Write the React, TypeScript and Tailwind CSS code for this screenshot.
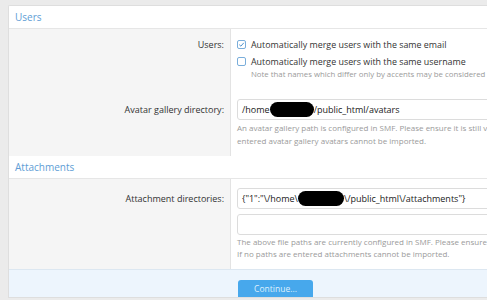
function Blob({ w }: { w: number }) {
  return (
    <span
      className="inline-block h-[15px] shrink-0 rounded-full bg-black"
      style={{ width: w }}
    />
  );
}

function Checkbox({ checked }: { checked?: boolean }) {
  return (
    <span className="flex h-[9px] w-[9px] shrink-0 items-center justify-center rounded-[2px] border border-[#7aaedb] bg-white">
      {checked && (
        <svg viewBox="0 0 10 10" className="h-[7px] w-[7px]">
          <path d="M1.8 5.2 L4.1 7.4 L8.3 2.6" fill="none" stroke="#4a8fcb" strokeWidth="1.4" />
        </svg>
      )}
    </span>
  );
}

function Row({ label, children, labelPt, pt, pb }: { label: string; children: React.ReactNode; labelPt: string; pt: string; pb: string }) {
  return (
    <div className="flex">
      <div className={`w-[222px] shrink-0 border-r border-[#e3e3e3] bg-[#f5f5f5] pr-[6px] text-right text-[9px] leading-[13px] text-[#333] ${labelPt}`}>
        {label}
      </div>
      <div className={`min-w-0 flex-1 bg-white pl-[6px] ${pt} ${pb}`}>{children}</div>
    </div>
  );
}

function Header({ title }: { title: string }) {
  return (
    <div className="flex h-[23px] items-center border-b border-[#e6e6e6] bg-white pl-[6px] text-[10px] text-[#609dd5]">
      {title}
    </div>
  );
}

function Input({ children }: { children?: React.ReactNode }) {
  return (
    <div className="flex h-[21px] items-center whitespace-nowrap rounded-[3px] border border-[#dcdcdc] bg-white px-[4px] text-[9px] text-[#222]">
      {children}
    </div>
  );
}

export default function App() {
  return (
    <div className="h-[300px] w-[487px] overflow-hidden bg-[#ebebeb] pl-[8px] pt-[5px] font-['Open_Sans',sans-serif]">
      <div className="w-[600px] overflow-hidden rounded-tl-[2px] border-l border-t border-b border-[#dedede] bg-white">
        <Header title="Users" />
        <Row label="Users:" labelPt="pt-[9px]" pt="pt-[9px]" pb="pb-[9px]">
          <div className="flex items-center gap-[5px] whitespace-nowrap text-[8.9px] leading-[13px] text-[#333]">
            <Checkbox checked />
            <span>Automatically merge users with the same email</span>
          </div>
          <div className="mt-[4px] flex items-center gap-[5px] whitespace-nowrap text-[8.9px] leading-[13px] text-[#333]">
            <Checkbox />
            <span>Automatically merge users with the same username</span>
          </div>
          <div className="pl-[14px] whitespace-nowrap text-[7.8px] leading-[12px] text-[#9a9a9a]">
            Note that names which differ only by accents may be considered the same user.
          </div>
        </Row>
        <Row label="Avatar gallery directory:" labelPt="pt-[14px]" pt="pt-[10px]" pb="pb-[9px]">
          <Input>
            <span>/home</span>
            <Blob w={44} />
            <span>/public_html/avatars</span>
          </Input>
          <div className="mt-[1px] whitespace-nowrap text-[8px] leading-[13px] text-[#9a9a9a]">
            <div>An avatar gallery path is configured in SMF. Please ensure it is still valid. If no path is</div>
            <div>entered avatar gallery avatars cannot be imported.</div>
          </div>
        </Row>
        <Header title="Attachments" />
        <Row label="Attachment directories:" labelPt="pt-[13px]" pt="pt-[9px]" pb="pb-[9px]">
          <Input>
            <span>{'{"1":"\\/home\\'}</span>
            <Blob w={46} />
            <span>{'\\/public_html\\/attachments"}'}</span>
          </Input>
          <div className="mt-[5px]">
            <Input />
          </div>
          <div className="mt-[1px] whitespace-nowrap text-[8px] leading-[12px] text-[#9a9a9a]">
            <div>The above file paths are currently configured in SMF. Please ensure they are still valid.</div>
            <div>If no paths are entered attachments cannot be imported.</div>
          </div>
        </Row>
        <div className="h-[28px] border-t border-[#dce7f1] bg-[#edf5fd] pl-[229px] pt-[4px]">
          <button className="h-[19px] w-[75px] rounded-[3px] bg-[#47a8ec] text-[8.5px] text-[#dff0fd]">
            Continue...
          </button>
        </div>
      </div>
    </div>
  );
}
